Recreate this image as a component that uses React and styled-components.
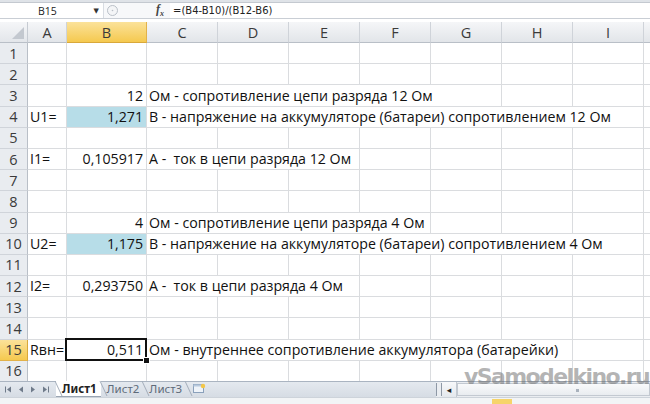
import React from "react";
import styled, { createGlobalStyle } from "styled-components";

const GlobalStyle = createGlobalStyle`
  html, body {
    margin: 0;
    padding: 0;
    background: #fff;
    overflow: hidden;
  }
`;

const FONT = `"Open Sans", "Noto Sans", "DejaVu Sans", sans-serif`;
const GRID = "#dadcdf";
const COLUMNS = "28px 39px 80px repeat(8, 71px)";
// последняя колонка J видна лишь краем, буквы не видно
const LETTERS = ["A", "B", "C", "D", "E", "F", "G", "H", "I", ""];

// строки листа: a – подпись, b – значение, c – пояснение, span – сколько колонок занимает текст
const rows = [
  {},
  {},
  { b: "12", c: "Ом - сопротивление цепи разряда 12 Ом", span: 5 },
  { a: "U1=", b: "1,271", fill: true, c: "В - напряжение на аккумуляторе (батареи) сопротивлением 12 Ом", span: 7 },
  {},
  { a: "I1=", b: "0,105917", c: "А -  ток в цепи разряда 12 Ом", span: 3 },
  {},
  {},
  { b: "4", c: "Ом - сопротивление цепи разряда 4 Ом", span: 4 },
  { a: "U2=", b: "1,175", fill: true, c: "В - напряжение на аккумуляторе (батареи) сопротивлением 4 Ом", span: 7 },
  {},
  { a: "I2=", b: "0,293750", c: "А -  ток в цепи разряда 4 Ом", span: 3 },
  {},
  {},
  { a: "Rвн=", b: "0,511", selected: true, c: "Ом - внутреннее сопротивление аккумулятора (батарейки)", span: 6 },
  {},
  {},
];

// маленькие стрелки прокрутки листов
const NavArrow = ({ dir, bar }) => (
  <svg width="7" height="7" viewBox="0 0 7 7">
    {dir === "left" ? (
      <polygon points="6,0.5 6,6.5 2,3.5" fill="#6f7b8a" />
    ) : (
      <polygon points="1,0.5 1,6.5 5,3.5" fill="#6f7b8a" />
    )}
    {bar && dir === "left" && <rect x="0" y="0.5" width="1" height="6" fill="#6f7b8a" />}
    {bar && dir === "right" && <rect x="6" y="0.5" width="1" height="6" fill="#6f7b8a" />}
  </svg>
);

function App() {
  return (
    <>
      <GlobalStyle />
      <Window>
        <RibbonEdge />
        <FormulaBar>
          <NameBox>
            <span>B15</span>
            <DropArrow>▼</DropArrow>
          </NameBox>
          <BarButtons>
            <CancelCircle>
              <svg width="11" height="11" viewBox="0 0 11 11">
                <circle cx="5.5" cy="5.5" r="5" fill="#f4f5f7" stroke="#b9bfc7" />
                <circle cx="5.5" cy="5.5" r="0.8" fill="#b9bfc7" />
              </svg>
            </CancelCircle>
            <Fx>
              f<sub>x</sub>
            </Fx>
          </BarButtons>
          <FormulaInput>=(B4-B10)/(B12-B6)</FormulaInput>
        </FormulaBar>
        <BarGap />

        <Sheet>
          <Row header>
            <Corner>
              <svg width="12" height="12" viewBox="0 0 12 12">
                <polygon points="12,0 12,12 0,12" fill="#c3c8cf" />
              </svg>
            </Corner>
            {LETTERS.map((l, k) => (
              <ColHead key={k} active={l === "B"}>
                {l}
              </ColHead>
            ))}
          </Row>

          {rows.map((r, i) => (
            <Row key={i}>
              <RowHead active={r.selected}>{i + 1}</RowHead>
              <Cell>{r.a}</Cell>
              <Cell right fill={r.fill} selected={r.selected}>
                {r.b}
                {r.selected && <FillHandle />}
              </Cell>
              <Cell style={{ gridColumn: `span ${r.span || 1}` }}>{r.c}</Cell>
              {Array.from({ length: 8 - (r.span || 1) }).map((_, k) => (
                <Cell key={k} />
              ))}
            </Row>
          ))}
        </Sheet>

        <TabStrip>
          <TabNav>
            <NavArrow dir="left" bar />
            <NavArrow dir="left" />
            <NavArrow dir="right" />
            <NavArrow dir="right" bar />
          </TabNav>
          <Tabs>
            <Tab active>Лист1</Tab>
            <Tab>Лист2</Tab>
            <Tab>Лист3</Tab>
            <Tab icon>
              <svg width="14" height="11" viewBox="0 0 14 11">
                <rect x="1.5" y="1.5" width="10" height="8" fill="#eef3f9" stroke="#8aa0bb" />
                <rect x="1.5" y="1.5" width="10" height="2" fill="#b8c9dd" />
                <circle cx="11" cy="3" r="2.2" fill="#f3c74a" />
              </svg>
            </Tab>
          </Tabs>
          <HScroll>
            <Splitter />
            <ScrollArrow>◂</ScrollArrow>
            <ScrollTrack>
              <Grip />
            </ScrollTrack>
          </HScroll>
        </TabStrip>
        <StatusEdge>
          <StatusMark />
        </StatusEdge>

        <Watermark>vSamodelkino.ru</Watermark>
      </Window>
    </>
  );
}

export default App;

const Window = styled.div`
  position: relative;
  width: 650px;
  height: 404px;
  display: flex;
  flex-direction: column;
  overflow: hidden;
  font-family: ${FONT};
  background: #fff;
`;

const RibbonEdge = styled.div`
  height: 3px;
  background: #dfe3e8;
  border-bottom: 1px solid #c4c9d0;
  box-sizing: border-box;
`;

const FormulaBar = styled.div`
  height: 16px;
  display: flex;
  align-items: center;
  background: #fff;
  border-bottom: 1px solid #c9ced5;
  box-sizing: border-box;
  font-size: 10.5px;
  color: #222;
`;

const NameBox = styled.div`
  width: 104px;
  height: 100%;
  display: flex;
  align-items: center;
  justify-content: space-between;
  padding: 0 4px 0 38px;
  box-sizing: border-box;
  border-right: 1px solid #d8dce2;
`;

const DropArrow = styled.span`
  font-size: 7px;
  color: #333;
`;

const BarButtons = styled.div`
  width: 66px;
  height: 100%;
  display: flex;
  align-items: center;
  justify-content: space-between;
  padding: 0 6px 0 3px;
  box-sizing: border-box;
  background: #f7f8fa;
`;

const CancelCircle = styled.span`
  display: flex;
`;

const Fx = styled.span`
  font-family: "Liberation Serif", serif;
  font-style: italic;
  font-weight: bold;
  font-size: 12px;
  color: #444;

  sub {
    font-size: 8px;
  }
`;

const FormulaInput = styled.div`
  flex: 1;
  padding-left: 3px;
  font-family: "DejaVu Sans", sans-serif;
  font-size: 10px;
`;

const BarGap = styled.div`
  height: 3px;
  background: #fff;
`;

const Sheet = styled.div`
  flex: 1;
  overflow: hidden;
`;

const Row = styled.div`
  display: grid;
  grid-template-columns: ${COLUMNS};
  height: ${({ header }) => (header ? "21px" : "21.2px")};
  font-size: 14.2px;
`;

const headBase = `
  display: flex;
  align-items: center;
  justify-content: center;
  box-sizing: border-box;
  color: #3a3a3a;
  font-size: 14.5px;
`;

const Corner = styled.div`
  ${headBase}
  justify-content: flex-end;
  align-items: flex-end;
  padding: 0 3px 3px 0;
  background: linear-gradient(#f5f6f8, #e3e6ea);
  border-right: 1px solid #c6cbd2;
  border-bottom: 1px solid #b9bfc7;
`;

const ColHead = styled.div`
  ${headBase}
  background: ${({ active }) =>
    active ? "linear-gradient(#fbe29a, #f5c94f)" : "linear-gradient(#f5f6f8, #e2e5e9)"};
  border-right: 1px solid ${({ active }) => (active ? "#e2b24a" : "#cfd3d9")};
  border-bottom: 1px solid ${({ active }) => (active ? "#d9a83a" : "#b9bfc7")};
`;

const RowHead = styled.div`
  ${headBase}
  background: ${({ active }) => (active ? "linear-gradient(#fbe29a, #f5c94f)" : "#e9ecf0")};
  border-right: 1px solid ${({ active }) => (active ? "#d9a83a" : "#b9bfc7")};
  border-bottom: 1px solid ${({ active }) => (active ? "#e2b24a" : "#d0d4da")};
`;

const Cell = styled.div`
  position: relative;
  box-sizing: border-box;
  display: flex;
  align-items: flex-end;
  justify-content: ${({ right }) => (right ? "flex-end" : "flex-start")};
  padding: 0 3px 1px 2px;
  white-space: pre;
  color: #111;
  background: ${({ fill }) => (fill ? "#b7dde8" : "#fff")};
  border-right: 1px solid ${GRID};
  border-bottom: 1px solid ${GRID};

  ${({ selected }) =>
    selected &&
    `
    &::after {
      content: "";
      position: absolute;
      left: -2px;
      top: -2px;
      right: -1px;
      bottom: -1px;
      border: 2px solid #111;
      pointer-events: none;
    }
  `}
`;

const FillHandle = styled.span`
  position: absolute;
  right: -4px;
  bottom: -4px;
  width: 5px;
  height: 5px;
  background: #111;
  border: 1px solid #fff;
  z-index: 2;
`;

const Watermark = styled.div`
  position: absolute;
  left: 464px;
  top: 364px;
  font-family: "DejaVu Sans", sans-serif;
  font-weight: bold;
  font-size: 22px;
  letter-spacing: -1.6px;
  color: rgba(105, 105, 105, 0.5);
  pointer-events: none;
`;

const TabStrip = styled.div`
  height: 16px;
  display: flex;
  align-items: stretch;
  background: linear-gradient(#e4e9ef, #d6dce4);
  border-top: 1px solid #aab4c1;
  box-sizing: border-box;
`;

const TabNav = styled.div`
  width: 56px;
  display: flex;
  align-items: center;
  justify-content: space-around;
  padding: 0 4px 0 2px;
  box-sizing: border-box;
`;

const Tabs = styled.div`
  display: flex;
  align-items: stretch;
  width: 380px;
`;

const Tab = styled.div`
  position: relative;
  display: flex;
  align-items: center;
  padding: 0 ${({ icon }) => (icon ? "4px" : "4px")} 0 6px;
  margin-top: -1px;
  font-family: "Noto Sans", sans-serif;
  font-size: 11.5px;
  font-weight: ${({ active }) => (active ? "bold" : "normal")};
  color: ${({ active }) => (active ? "#222" : "#5e6a79")};
  background: ${({ active }) => (active ? "#fff" : "transparent")};
  border-bottom: 1px solid ${({ active }) => (active ? "#9aa5b3" : "transparent")};

  &::before {
    content: "";
    position: absolute;
    left: 2px;
    top: 0;
    bottom: 0;
    border-left: 1px solid #a3adba;
    transform: skewX(25deg);
  }
`;

const HScroll = styled.div`
  flex: 1;
  display: flex;
  align-items: stretch;
  background: #eaedf1;
`;

const Splitter = styled.div`
  width: 4px;
  border-left: 1px solid #8e98a6;
  border-right: 1px solid #8e98a6;
  margin: 1px 0;
`;

const ScrollArrow = styled.div`
  width: 14px;
  display: flex;
  align-items: center;
  justify-content: center;
  font-size: 9px;
  color: #222;
  background: linear-gradient(#f7f8fa, #e4e8ed);
  border-right: 1px solid #c3c9d1;
`;

const ScrollTrack = styled.div`
  flex: 1;
  position: relative;
  background: linear-gradient(#f9fafb, #e9ecf0);
  border: 1px solid #c3c9d1;
  margin: 1px 0;
`;

const Grip = styled.span`
  position: absolute;
  left: 118px;
  top: 5px;
  width: 3px;
  height: 3px;
  background: #a9b2bd;
`;

const StatusEdge = styled.div`
  height: 6px;
  position: relative;
  background: #f2f4f6;
  border-top: 1px solid #cdd3da;
`;

const StatusMark = styled.span`
  position: absolute;
  left: 492px;
  top: 1px;
  width: 20px;
  height: 5px;
  background: #f6d46a;
`;
